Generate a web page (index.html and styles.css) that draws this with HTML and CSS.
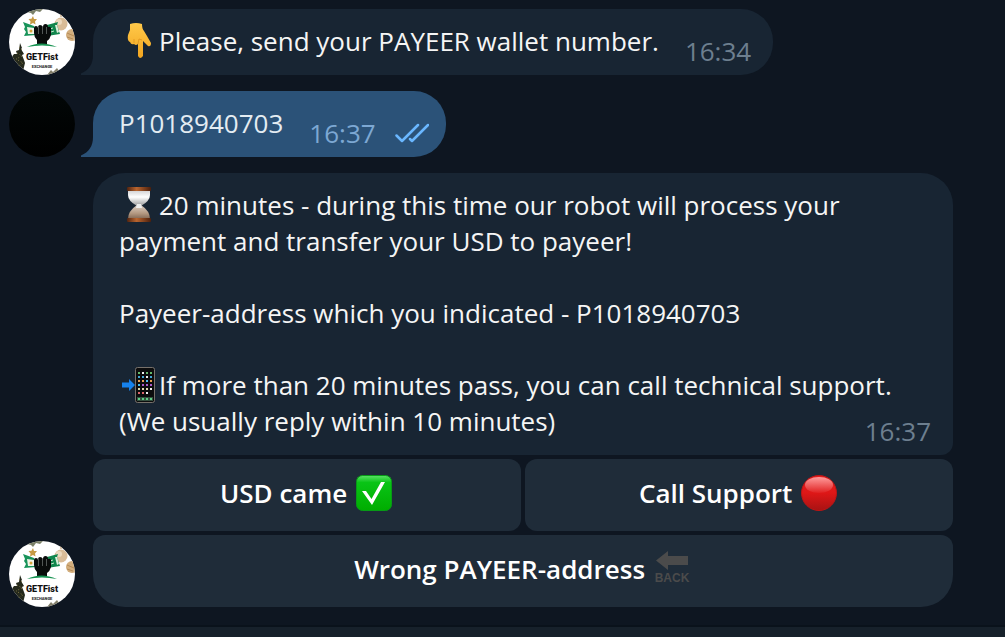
FILE: index.html
```html
<!DOCTYPE html>
<html lang="en">
<head>
	<meta charset="UTF-8">
	<title>GETFist Exchange</title>
	<link rel="stylesheet" href="styles.css">
</head>
<body>
	<!-- shared drawings -->
	<svg class="defs" width="0" height="0" aria-hidden="true">
		<symbol id="tail" viewBox="0 0 12 20">
			<path d="M12 0C12 9 8 15 0 18.500V20H12Z"/>
		</symbol>
		<symbol id="logo" viewBox="0 0 66 66">
			<rect width="66" height="66" fill="#fff"/>
			<path d="M18 3L22 4 24 6 27 2 31 3 34 0H20ZM46 0L48 3 52 4 55 0Z" fill="#7b8068"/>
			<path d="M24 7l1 3 3 0-2 2.500.5 3-2.500-1.500-3 1.500.5-3-2-2.500 3-.3z" fill="#c69a45"/>
			<circle cx="52" cy="15" r="6.500" fill="#d9bc98"/>
			<circle cx="50" cy="13" r="3" fill="#ecd9bf"/>
			<circle cx="63" cy="26" r="6" fill="#d3ae7d"/>
			<path d="M58 24l7 3M58 28l6 2M52 8V2" stroke="#b58b57" fill="none"/>
			<path d="M14 13l11 4 2 9-12 1 2-4-2-3 1-2z" fill="#18935a"/>
			<path d="M18 18l7 1 1 6-7 0z" fill="#f2f5e8"/>
			<circle cx="22" cy="22" r="1.500" fill="#d5a43c"/>
			<path d="M38 16l11-3-1 3 3 9-13 2z" fill="#11864d"/>
			<path d="M46 16l2 0 2 7-2 1z" fill="#dcefdc"/>
			<path d="M41 20l3-1M42 23l3-1" stroke="#c6e4ca" fill="none"/>
			<path d="M25 19q0-2 2-2t2 2q0-3 2-3t3 2q0-3 2.500-3t2.500 3q2-1 3 1v7q-1 4-4 6v4H28v-5q-3-3-3-7z" fill="#090c0b"/>
			<path d="M29.500 18v7M33.500 18v7M37.500 18v7" stroke="#858b88" stroke-width=".6" fill="none"/>
			<path d="M18 38q14-7 30 0-15-3-30 0z" fill="#169251"/>
			<path d="M11 34l2 5-1 1 3 5-2 1 2 5 1 3-2 8-7 3L2 49l3-4 3 0-1-3 3-1z" fill="#25291c"/>
			<path d="M8 44l5 3-6 3 7 4-6 4M10 38l3 3" stroke="#807847" stroke-dasharray="1 2" fill="none"/>
			<path d="M38 66l4-5 2 2 4-4 2 3 4-1-4 6z" fill="#827e69"/>
		</symbol>
	</svg>

	<main class="chat">
		<section class="row">
			<svg class="avatar" viewBox="0 0 66 66" role="img" aria-label="GETFist Exchange">
				<use href="#logo"/>
				<text class="logo-name" x="33" y="51" text-anchor="middle">GETFist</text>
				<text class="logo-sub" x="33" y="59" text-anchor="middle">EXCHANGE</text>
			</svg>
			<div class="bubble">
				<svg class="tail" aria-hidden="true"><use href="#tail"/></svg>
				<p class="text"><svg class="emoji" viewBox="0 0 36 36" aria-hidden="true">
					<defs>
						<linearGradient id="hand" x2="0" y2="1"><stop stop-color="#ffc94a"/><stop offset="1" stop-color="#f2a51f"/></linearGradient>
					</defs>
					<path d="M9 1Q15-1 21 1q0 5 2 7l3 5 4 7q0 4-3 3l-5-5v15q-3 4-5 0V21q-2 2-4 0-3 1-4-2-3-1-2-7l2-5z" fill="url(#hand)"/>
					<path d="M13 20v-4M17 21l1-5 3 1" fill="none" stroke="#e39a22"/>
				</svg>Please, send your PAYEER wallet number.</p>
				<time class="time">16:34</time>
			</div>
		</section>

		<section class="row">
			<div class="avatar dark"></div>
			<div class="bubble out">
				<svg class="tail" aria-hidden="true"><use href="#tail"/></svg>
				<p class="text">P1018940703</p>
				<time class="time">16:37</time>
				<svg class="ticks" viewBox="0 0 34 20" role="img" aria-label="Read">
					<path d="M1.500 12.500L7 18 23 2M15 16l2 2L33 2" fill="none" stroke="#6ab7ff" stroke-width="2.500" stroke-linecap="round" stroke-linejoin="round"/>
				</svg>
			</div>
		</section>

		<section class="row">
			<svg class="avatar" viewBox="0 0 66 66" role="img" aria-label="GETFist Exchange">
				<use href="#logo"/>
				<text class="logo-name" x="33" y="51" text-anchor="middle">GETFist</text>
				<text class="logo-sub" x="33" y="59" text-anchor="middle">EXCHANGE</text>
			</svg>
			<div class="post">
				<div class="bubble long">
					<p class="text"><svg class="emoji" viewBox="0 0 36 36" aria-hidden="true">
						<defs>
							<linearGradient id="glass" x2="0" y2="1"><stop stop-color="#d5d5d7"/><stop offset=".4" stop-color="#fff"/><stop offset="1" stop-color="#999"/></linearGradient>
							<linearGradient id="sand" x2="0" y2="1"><stop stop-color="#ddd0c5"/><stop offset=".6" stop-color="#b39881"/><stop offset="1" stop-color="#806653"/></linearGradient>
							<linearGradient id="wood"><stop stop-color="#51230f"/><stop offset=".4" stop-color="#b9652f"/><stop offset="1" stop-color="#4c1f0c"/></linearGradient>
						</defs>
						<path d="M7 4h22v4q0 6-9 11h-4Q7 14 7 8z" fill="url(#glass)"/>
						<path d="M16 18h4q9 6 9 14H7q0-8 9-14z" fill="url(#sand)"/>
						<path d="M16 17h4l1 4h-6z" fill="#eee"/>
						<rect x="6" y="0" width="24" height="4" rx="1" fill="url(#wood)"/>
						<rect x="6" y="31" width="24" height="4" rx="1" fill="url(#wood)"/>
					</svg>20 minutes - during this time our robot will process your payment and transfer your USD to payeer!<br>
					<br>
					Payeer-address which you indicated - P1018940703<br>
					<br>
					<svg class="emoji" viewBox="0 0 36 36" aria-hidden="true">
						<rect x="14.500" y=".5" width="19" height="35" rx="2" fill="#0c0c0d" stroke="#77716b"/>
						<path d="M1 15.500h7V12l6 6-6 6v-3.500H1z" fill="#1682ed"/>
						<g fill="none" stroke-width="2" stroke-dasharray="2 2">
							<path d="M17 6h14" stroke="#64b96a"/>
							<path d="M17 10h14" stroke="#41a8d7"/>
							<path d="M17 14h14" stroke="#e7a052"/>
							<path d="M17 18h14" stroke="#aa5acb"/>
							<path d="M17 22h14" stroke="#ded9ad"/>
							<path d="M17 26h10" stroke="#dc656b"/>
							<path d="M21 6h2M29 22h2M25 26h2M25 10h2" stroke="#eee"/>
							<path d="M25 14h2M17 18h2" stroke="#4bbcf0"/>
						</g>
						<path d="M16 30h16v4H16z" fill="#33503f"/>
						<path d="M17 32h14" stroke="#5fce84" stroke-width="2" stroke-dasharray="2 2"/>
					</svg>If more than 20 minutes pass, you can call technical support.<br>
					(We usually reply within 10 minutes)</p>
					<time class="time">16:37</time>
				</div>
				<div class="buttons">
					<button type="button">USD came <svg class="emoji" viewBox="0 0 36 36" aria-hidden="true">
						<defs>
							<linearGradient id="green" x2="0" y2="1"><stop stop-color="#5ce267"/><stop offset=".2" stop-color="#09c416"/><stop offset="1" stop-color="#00ad00"/></linearGradient>
						</defs>
						<rect x=".5" y=".5" width="35" height="35" rx="6" fill="url(#green)" stroke="#079b16"/>
						<path d="M6 16h4l5.500 8L25 7h4L16 30z" fill="#fff"/>
					</svg></button>
					<button type="button">Call Support <svg class="emoji" viewBox="0 0 36 36" aria-hidden="true">
						<defs>
							<linearGradient id="red" x2="0" y2="1"><stop stop-color="#e62020"/><stop offset=".5" stop-color="#de1717"/><stop offset="1" stop-color="#a81313"/></linearGradient>
							<linearGradient id="shine" x2="0" y2="1"><stop stop-color="#ff9c9c"/><stop offset="1" stop-color="#e02020"/></linearGradient>
						</defs>
						<circle cx="18" cy="18" r="17.500" fill="url(#red)" stroke="#bd1515"/>
						<ellipse cx="18" cy="10" rx="14" ry="8" fill="url(#shine)"/>
					</svg></button>
					<button type="button" class="wide">Wrong PAYEER-address <svg class="emoji" viewBox="0 0 36 36" aria-hidden="true">
						<path d="M2 9.500L14 0v5h20v9H14v5z" fill="#4b4b4b"/>
						<text class="back" x="18" y="31" text-anchor="middle">BACK</text>
					</svg></button>
				</div>
			</div>
		</section>
	</main>
	<footer class="composer"></footer>
</body>
</html>
```
FILE: styles.css
```css
*{
	margin: 0;
	padding: 0;
	box-sizing: border-box;
}
body{
	min-height: 100vh;
	display: flex;
	flex-direction: column;
	background-color: #0e1621;
	color: #f5f5f5;
	font: 26px/36px "Open Sans","Noto Sans",sans-serif;
}
.defs{
	position: absolute;
}
.chat{
	display: flex;
	flex-direction: column;
	gap: 16px;
	padding: 9px 52px 18px 9px;
}
.row{
	display: flex;
	align-items: flex-end;
	gap: 18px;
}
.avatar{
	flex: none;
	width: 66px;
	height: 66px;
	border-radius: 50%;
}
.dark{
	background: linear-gradient(#020707,#000);
}
.logo-name{
	font: 900 9px Roboto,sans-serif;
	fill: #111;
}
.logo-sub{
	font: 900 4px Roboto,sans-serif;
	fill: #333;
}
.bubble{
	position: relative;
	display: flex;
	align-items: flex-end;
	padding: 0 22px 0 26px;
	border-radius: 32px 32px 32px 0;
	background-color: #182533;
	color: #f5f5f5;
}
.text{
	padding: 14px 0 16px;
}
.time{
	margin-left: 26px;
	padding-bottom: 6px;
	color: #6d7f8f;
}
.tail{
	position: absolute;
	left: -12px;
	bottom: 0;
	width: 12px;
	height: 20px;
	fill: #182533;
}
.out{
	padding-right: 17px;
	background-color: #2b5278;
	color: #e4ecf2;
}
.out .tail{
	fill: #2b5278;
}
.out .time{
	color: #7da8d3;
}
.ticks{
	width: 34px;
	height: 20px;
	margin: 0 0 14px 19px;
}
.post{
	flex: 1;
}
/* the time shares the cell with the last line of text */
.long{
	display: grid;
	border-radius: 32px 32px 12px 12px;
}
.long .text,
.long .time{
	grid-area: 1 / 1;
}
.long .time{
	justify-self: end;
}
.emoji{
	width: 36px;
	height: 36px;
	margin: 0 2px;
	vertical-align: top;
}
.buttons{
	display: grid;
	grid-template-columns: 1fr 1fr;
	gap: 4px;
	margin-top: 4px;
}
button{
	padding: 16px 12px 20px;
	border: 0;
	border-radius: 12px;
	background-color: #1f2c39;
	color: #fff;
	font: inherit;
	font-weight: 600;
	cursor: pointer;
}
.wide{
	grid-column: span 2;
	border-radius: 12px 12px 32px 32px;
}
.back{
	font: bold 12px "Liberation Sans",sans-serif;
	fill: #4b4b4b;
}
.composer{
	flex: 1;
	min-height: 12px;
	border-top: 2px solid #0a121b;
	background-color: #17212b;
}
```
